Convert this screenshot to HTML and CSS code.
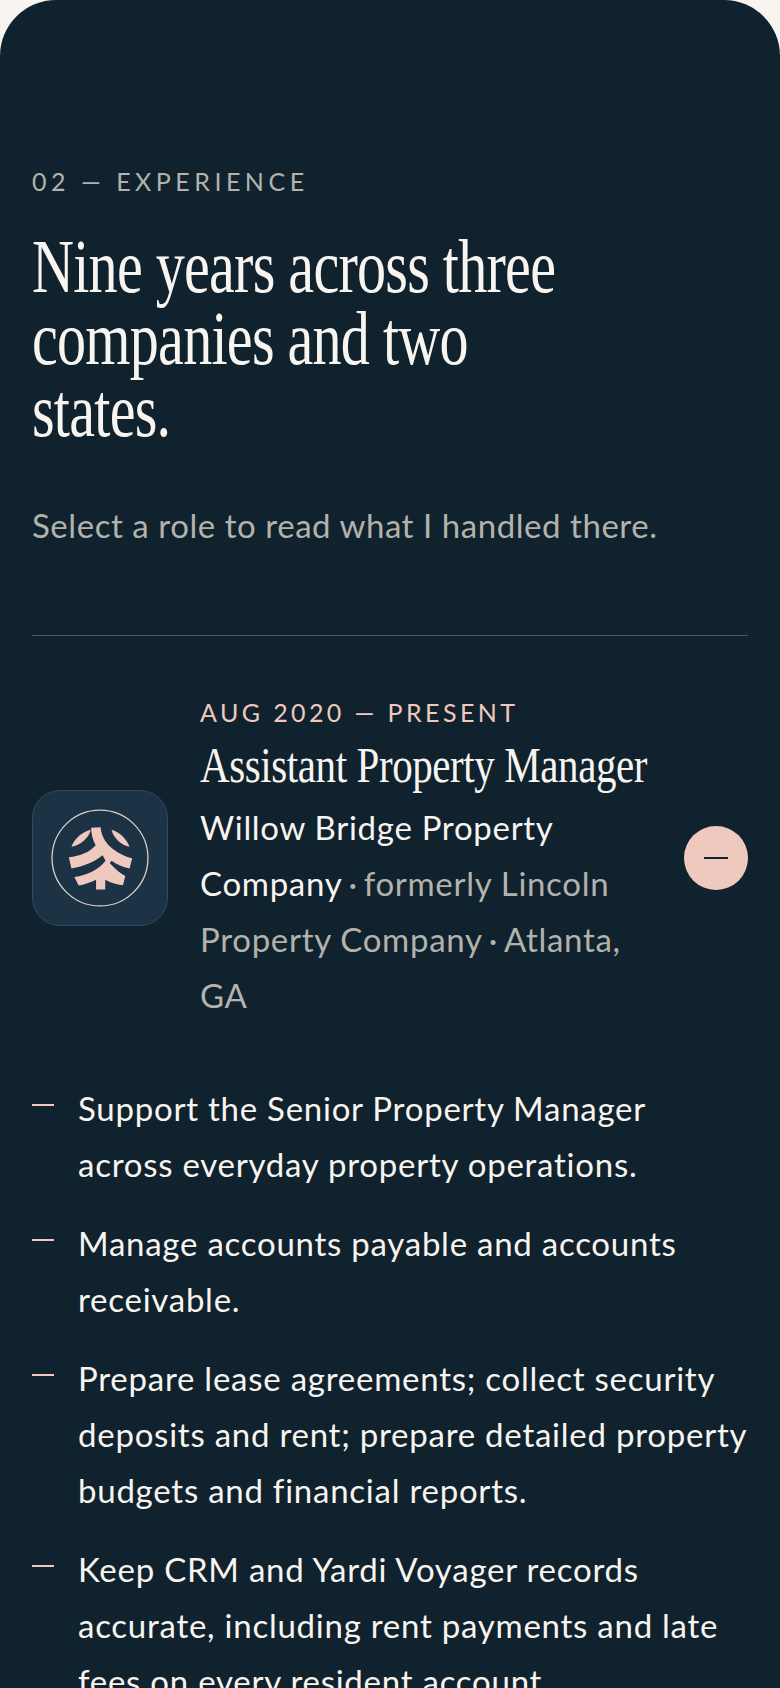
FILE: index.html
```html
<!DOCTYPE html>
<html lang="en">
<head>
  <meta charset="UTF-8" />
  <meta name="viewport" content="width=device-width, initial-scale=1.0" />
  <title>Experience</title>
  <link rel="stylesheet" href="styles.css">
</head>
<body>

<section class="experience">
  <p class="eyebrow">02 — Experience</p>
  <h2 class="heading">Nine years across three<br>companies and two<br>states.</h2>
  <p class="intro">Select a role to read what I handled there.</p>

  <article class="role">
    <header class="role-head">
      <div class="logo">
        <svg viewBox="-84 -90 408 408" width="134" height="134">
          <circle cx="120" cy="114" r="146" fill="none" stroke="#d9cfc8" stroke-width="4"/>
          <path fill="#f0c9be" d="M92 28C65 35 42 55 33 80C60 75 85 55 92 28Z"/>
          <path fill="#f0c9be" d="M155 28C180 35 200 55 210 80C185 75 162 55 155 28Z"/>
          <path fill="#f0c9be" d="M93 22L122 20C124 55 150 95 218 115L210 146C190 141 170 133 155 122L150 130C165 145 180 160 197 169L190 197C170 195 150 188 136 180L136 210L108 210L108 180C90 188 72 195 55 198L42 172C80 166 115 150 137 122L128 106C105 125 70 140 33 146L25 112C60 108 90 95 107 75C98 60 93 40 93 22Z"/>
        </svg>
      </div>
      <div class="role-text">
        <p class="role-date">Aug 2020 — Present</p>
        <h3 class="role-title">Assistant Property Manager</h3>
        <p class="role-org"><span class="org-name">Willow Bridge Property Company</span><wbr><span class="sep">·</span><wbr>formerly Lincoln Property Company<wbr><span class="sep">·</span><wbr>Atlanta, GA</p>
      </div>
      <button class="toggle" aria-label="Collapse role"><span class="toggle-bar"></span></button>
    </header>

    <ul class="duties">
      <li>Support the Senior Property Manager<br>across everyday property operations.</li>
      <li>Manage accounts payable and accounts receivable.</li>
      <li>Prepare lease agreements; collect security deposits and rent; prepare detailed property budgets and financial reports.</li>
      <li>Keep CRM and Yardi Voyager records accurate, including rent payments and late fees on every resident account.</li>
    </ul>
  </article>
</section>

</body>
</html>
```

FILE: styles.css
```css
html, body { margin: 0; height: 100%; overflow: hidden; }
body { background-color: #f8f4ef; font-family: Lato, "Noto Sans", sans-serif; }

.experience { background-color: #10222e; border-radius: 56px 56px 0 0; padding: 166px 32px 0; min-height: 1688px; box-sizing: border-box; color: #f8f4ef; }

.eyebrow { margin: 0; font-size: 25px; line-height: 30px; letter-spacing: 4.5px; text-transform: uppercase; color: #b3b2ac; }
.heading { margin: 34px 0 0; font-family: "Liberation Serif", serif; font-weight: 400; font-size: 76px; line-height: 72px; letter-spacing: -1px; color: #f8f4ef; transform: scaleX(.765); transform-origin: left; white-space: nowrap; }
.intro { margin: 55px 0 0; font-size: 33px; line-height: 48px; letter-spacing: .55px; color: #b3b2ac; }

.role { margin-top: 86px; border-top: 1px solid #4a5a63; }
.role-head { display: flex; align-items: center; gap: 32px; padding-top: 61px; }
.logo { flex: none; display: flex; width: 136px; height: 136px; box-sizing: border-box; align-items: center; justify-content: center; background-color: #1b3344; border: 1px solid #33495a; border-radius: 28px; }
.logo svg { display: block; }
.role-text { flex: 1; min-width: 0; margin-bottom: -4px; }
.role-date { margin: 0; font-size: 25px; line-height: 30px; letter-spacing: 3.4px; text-transform: uppercase; color: #f0c9be; }
.role-title { margin: 10px 0 0; font-family: "Liberation Serif", serif; font-weight: 400; font-size: 50px; line-height: 56px; letter-spacing: -.5px; color: #f8f4ef; transform: scaleX(.82); transform-origin: left; white-space: nowrap; }
.role-org { margin: 6px 0 0; font-size: 33px; line-height: 56px; letter-spacing: .7px; color: #b3b2ac; }
.org-name { color: #f8f4ef; }
.sep { padding: 0 6px; }
.toggle { flex: none; display: flex; width: 64px; height: 64px; padding: 0; align-items: center; justify-content: center; background-color: #f0c9be; border: 0; border-radius: 50%; }
.toggle-bar { display: block; width: 24px; height: 2px; background-color: #10222e; }

.duties { list-style: none; margin: 61px 0 0; padding: 0; }
.duties li { position: relative; padding-left: 46px; margin-bottom: 23px; font-size: 33px; line-height: 56px; letter-spacing: .75px; color: #f8f4ef; }
.duties li::before { content: ""; position: absolute; left: 0; top: 24px; width: 22px; height: 2px; background-color: #f0c9be; }
```
